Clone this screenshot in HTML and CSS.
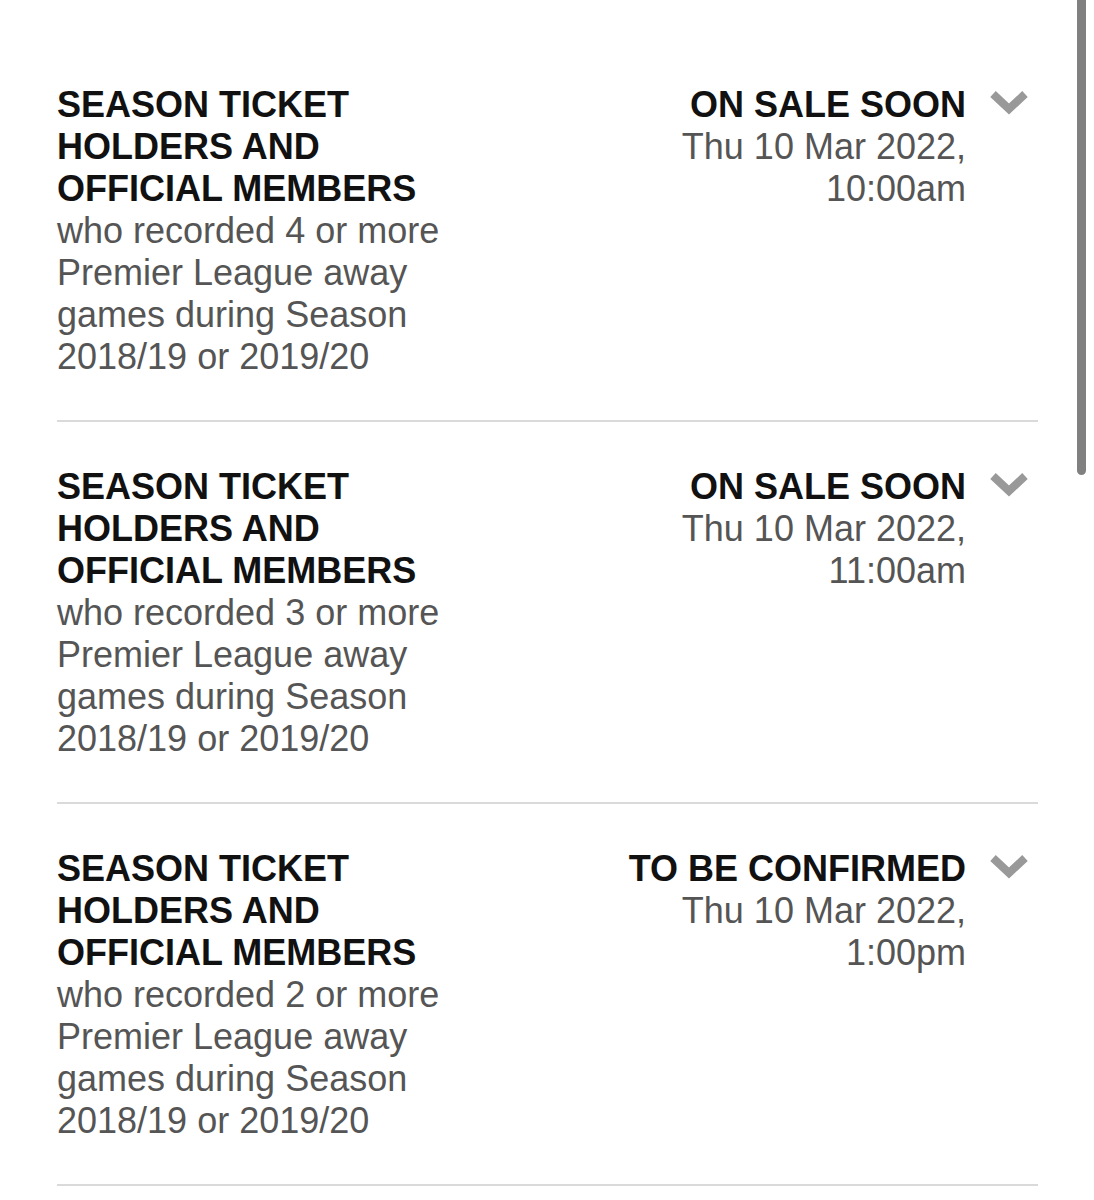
FILE: index.html
```html
<!DOCTYPE html>
<html lang="en">
<head>
    <meta charset="UTF-8">
    <meta name="viewport" content="width=device-width, initial-scale=1.0">
    <title>Ticket sale dates</title>
    <link rel="stylesheet" href="styles.css">
</head>
<body>
    <div class="sale-list">
        <!-- phase 1 -->
        <div class="sale-row">
            <div class="sale-info">
                <h3 class="sale-title">SEASON TICKET HOLDERS AND OFFICIAL MEMBERS</h3>
                <p class="sale-desc">who recorded 4 or more Premier League away games during Season 2018/19 or 2019/20</p>
            </div>
            <div class="sale-status">
                <div class="status-text">
                    <strong>ON SALE SOON</strong>
                    <span>Thu 10 Mar 2022, 10:00am</span>
                </div>
                <svg class="chevron" viewBox="0 0 40 26"><polyline points="4,5 20,20 36,5"/></svg>
            </div>
        </div>

        <!-- phase 2 -->
        <div class="sale-row">
            <div class="sale-info">
                <h3 class="sale-title">SEASON TICKET HOLDERS AND OFFICIAL MEMBERS</h3>
                <p class="sale-desc">who recorded 3 or more Premier League away games during Season 2018/19 or 2019/20</p>
            </div>
            <div class="sale-status">
                <div class="status-text">
                    <strong>ON SALE SOON</strong>
                    <span>Thu 10 Mar 2022, 11:00am</span>
                </div>
                <svg class="chevron" viewBox="0 0 40 26"><polyline points="4,5 20,20 36,5"/></svg>
            </div>
        </div>

        <!-- phase 3 -->
        <div class="sale-row">
            <div class="sale-info">
                <h3 class="sale-title">SEASON TICKET HOLDERS AND OFFICIAL MEMBERS</h3>
                <p class="sale-desc">who recorded 2 or more Premier League away games during Season 2018/19 or 2019/20</p>
            </div>
            <div class="sale-status">
                <div class="status-text">
                    <strong>TO BE CONFIRMED</strong>
                    <span>Thu 10 Mar 2022, 1:00pm</span>
                </div>
                <svg class="chevron" viewBox="0 0 40 26"><polyline points="4,5 20,20 36,5"/></svg>
            </div>
        </div>
    </div>

    <div class="scroll-thumb"></div>
</body>
</html>
```

FILE: styles.css
```css
* {
    box-sizing: border-box;
    margin: 0;
    padding: 0;
}

body {
    font-family: "Liberation Sans", Arial, sans-serif;
    background: #fff;
    color: #111;
}

.sale-list {
    width: 981px;
    margin-left: 57px;
    padding-top: 40px;
}

.sale-row {
    display: flex;
    justify-content: space-between;
    align-items: flex-start;
    padding: 44px 0 42px;
    border-bottom: 2px solid #dadada;
    font-size: 36px;
    line-height: 42px;
}

.sale-info {
    width: 420px;
}

.sale-title {
    font-size: 36px;
    font-weight: bold;
    color: #111;
}

.sale-desc {
    color: #555;
}

.sale-status {
    display: flex;
    align-items: flex-start;
    padding-right: 9px;
}

.status-text {
    width: 360px;
    text-align: right;
    color: #555;
}

    .status-text strong {
        display: block;
        color: #111;
    }

.chevron {
    width: 40px;
    height: 26px;
    margin-left: 23px;
    margin-top: 5px;
}

    .chevron polyline {
        fill: none;
        stroke: #999;
        stroke-width: 8;
    }

/* overlay scroll indicator */
.scroll-thumb {
    position: fixed;
    top: -6px;
    right: 8px;
    width: 9px;
    height: 481px;
    border-radius: 5px;
    background: #808080;
}
```
